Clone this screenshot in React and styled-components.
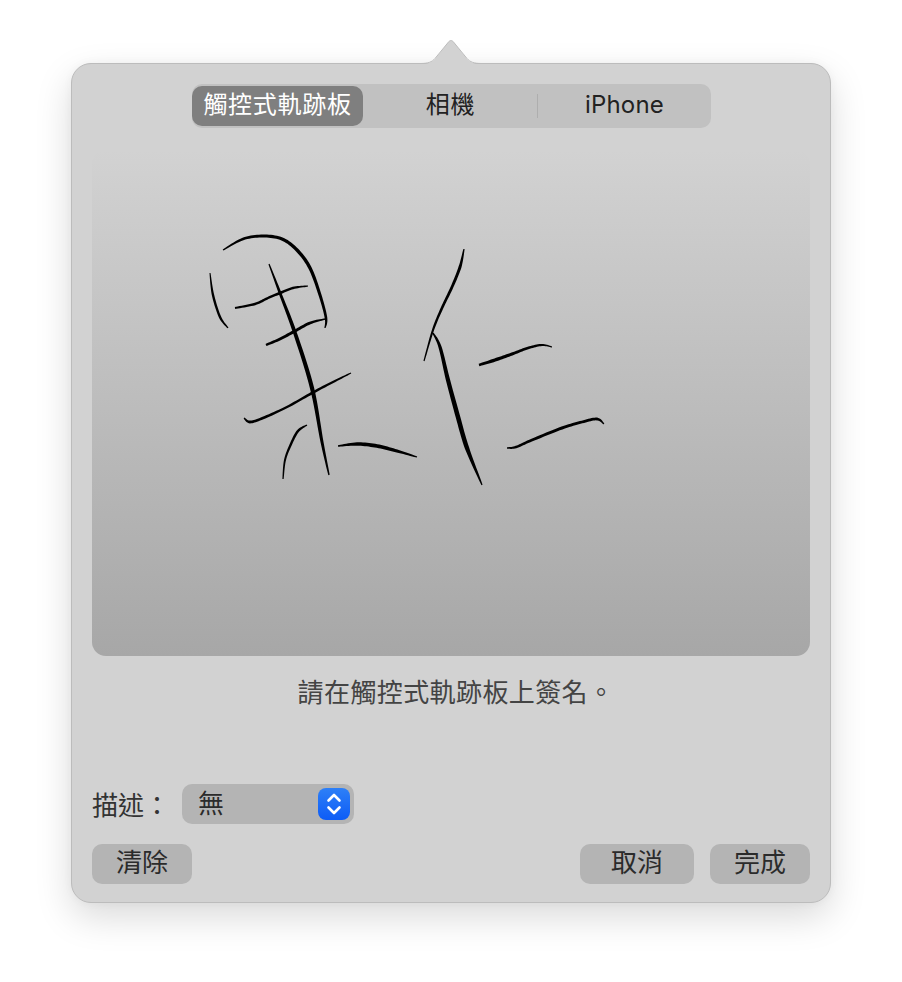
import React from "react";
import styled, { createGlobalStyle } from "styled-components";

// pen strokes in page pixels: [x, y, width]
const strokes = [
  [[223, 250, 1.2], [243, 239, 2.6], [263, 236, 3], [282, 239, 3.2], [297, 250, 3.4], [310, 268, 3.4], [320, 295, 3], [326, 318, 2.6], [325, 328, 1.2]],
  [[210, 273, 1], [213, 295, 2.4], [220, 317, 2.4], [228, 328, 1.2]],
  [[269, 264, 1.2], [280, 293, 2.8], [295, 333, 3.8], [312, 388, 4.2], [322, 442, 3], [329, 475, 1.4]],
  [[235, 308, 2], [255, 304, 2.4], [268, 298, 2.4], [280, 293, 2.6], [293, 288, 2.4], [308, 286, 1.2]],
  [[266, 345, 2.4], [280, 339, 2.8], [295, 331, 3], [310, 323, 2.8], [325, 319, 1.4]],
  [[244, 418, 1.2], [250, 422, 2.8], [263, 418, 2.6], [287, 407, 2.4], [312, 393, 2.6], [333, 382, 2.2], [351, 373, 1.2]],
  [[283, 479, 1.2], [285, 460, 2], [291, 444, 2.4], [298, 431, 2.6], [307, 425, 1.2]],
  [[338, 446, 1.4], [357, 444, 3.4], [377, 446, 3.8], [397, 451, 3], [417, 457, 1.2]],
  [[464, 249, 1.2], [460, 267, 3], [452, 287, 2.8], [442, 308, 2.6], [433, 330, 2.2], [424, 361, 1.2]],
  [[433, 333, 1.4], [440, 347, 3.2], [448, 380, 4.2], [458, 417, 4.6], [467, 448, 4.4], [482, 485, 1.2]],
  [[479, 365, 2.4], [495, 360, 3.4], [512, 354, 3], [528, 348, 2.6], [542, 345, 2.2], [552, 347, 1]],
  [[507, 448, 1.4], [516, 447, 2.4], [532, 440, 2.8], [562, 428, 3], [582, 422, 2.8], [597, 419, 2.8], [604, 424, 1]],
];

// catmull-rom through the points, then an outline offset by the pen width
const strokePath = (points) => {
  const samples = [];
  for (let i = 0; i < points.length - 1; i++) {
    const p0 = points[Math.max(i - 1, 0)];
    const p1 = points[i];
    const p2 = points[i + 1];
    const p3 = points[Math.min(i + 2, points.length - 1)];
    for (let s = 0; s < 10; s++) {
      const t = s / 10;
      const at = (k) =>
        0.5 *
        (2 * p1[k] +
          (p2[k] - p0[k]) * t +
          (2 * p0[k] - 5 * p1[k] + 4 * p2[k] - p3[k]) * t * t +
          (3 * p1[k] - p0[k] - 3 * p2[k] + p3[k]) * t * t * t);
      samples.push([at(0), at(1), p1[2] + (p2[2] - p1[2]) * t]);
    }
  }
  samples.push(points[points.length - 1]);
  const left = [];
  const right = [];
  samples.forEach((p, i) => {
    const a = samples[Math.max(i - 1, 0)];
    const b = samples[Math.min(i + 1, samples.length - 1)];
    const dx = b[0] - a[0];
    const dy = b[1] - a[1];
    const len = Math.hypot(dx, dy) || 1;
    const nx = (-dy / len) * (p[2] / 2);
    const ny = (dx / len) * (p[2] / 2);
    left.push(`${(p[0] + nx).toFixed(2)} ${(p[1] + ny).toFixed(2)}`);
    right.unshift(`${(p[0] - nx).toFixed(2)} ${(p[1] - ny).toFixed(2)}`);
  });
  return `M${left.join("L")}L${right.join("L")}Z`;
};

const App = () => (
  <Page>
    <GlobalStyle />
    <Popover>
      <Arrow viewBox="0 0 66 28" aria-hidden="true">
        <path
          d="M3 25C10 25 14 23.5 17 20L30.5 3C32 1 34 1 35.5 3L49 20C52 23.5 56 25 63 25V27H3Z"
          fill="#d2d2d2"
        />
        <path
          d="M3 24.5C10 24.5 14 23 17 19.5L30.5 3C32 1 34 1 35.5 3L49 19.5C52 23 56 24.5 63 24.5"
          fill="none"
          stroke="#bcbcbc"
          strokeWidth="1"
        />
      </Arrow>
      <Segments>
        <Segment $active $width={171} $spacing={0.7}>觸控式軌跡板</Segment>
        <Segment $width={175} $spacing={0.7} $divider>相機</Segment>
        <Segment $width={173} $spacing={0.2}>iPhone</Segment>
      </Segments>
      <Pad>
        <Signature viewBox="92 150 718 506" aria-hidden="true">
          {strokes.map((points, i) => (
            <path key={i} d={strokePath(points)} fill="#000" />
          ))}
        </Signature>
      </Pad>
      <Caption>請在觸控式軌跡板上簽名。</Caption>
      <DescriptionRow>
        <Label>描述：</Label>
        <Select>
          <SelectText>無</SelectText>
          <Stepper>
            <svg width="18" height="26" viewBox="0 0 18 26" fill="none" stroke="#fff" strokeWidth="2.6" strokeLinecap="round" strokeLinejoin="round">
              <path d="M3.5 9.5L9 4L14.5 9.5" />
              <path d="M3.5 16.5L9 22L14.5 16.5" />
            </svg>
          </Stepper>
        </Select>
      </DescriptionRow>
      <Actions>
        <Button $width={100}>清除</Button>
        <RightActions>
          <Button $width={114}>取消</Button>
          <Button $width={100}>完成</Button>
        </RightActions>
      </Actions>
    </Popover>
  </Page>
);

const GlobalStyle = createGlobalStyle`
  html, body {
    margin: 0;
    background: #fff;
  }
`;

const Page = styled.div`
  box-sizing: border-box;
  width: 902px;
  height: 982px;
  padding: 63px 0 0 71px;
  overflow: hidden;
  font-family: "Inter", "Noto Sans CJK TC", sans-serif;
`;

const Popover = styled.div`
  position: relative;
  box-sizing: border-box;
  display: flex;
  flex-direction: column;
  width: 760px;
  height: 840px;
  padding: 20px 20px 18px;
  border: 1px solid #bcbcbc;
  border-radius: 20px;
  background: #d2d2d2;
  box-shadow: 0 14px 36px rgba(0, 0, 0, 0.15), 0 0 10px rgba(0, 0, 0, 0.04);
`;

const Arrow = styled.svg`
  position: absolute;
  top: -25px;
  left: 346px;
  width: 66px;
  height: 28px;
  overflow: visible;
`;

const Segments = styled.div`
  display: flex;
  align-self: center;
  width: 519px;
  height: 44px;
  margin-left: 1px;
  border-radius: 10px;
  background: #c1c1c1;
`;

const Segment = styled.div`
  position: relative;
  display: flex;
  align-items: center;
  justify-content: center;
  box-sizing: border-box;
  width: ${(p) => p.$width}px;
  height: ${(p) => (p.$active ? "40px" : "44px")};
  margin: ${(p) => (p.$active ? "2px 0" : "0")};
  padding-bottom: 2px;
  border-radius: 10px;
  background: ${(p) => (p.$active ? "#7f7f7f" : "transparent")};
  color: ${(p) => (p.$active ? "#fff" : "#222")};
  font-size: 24px;
  letter-spacing: ${(p) => p.$spacing}px;
  line-height: 1;

  ${(p) =>
    p.$divider &&
    `&::after {
      content: "";
      position: absolute;
      top: 10px;
      right: 0;
      width: 1px;
      height: 24px;
      background: #aeaeae;
    }`}
`;

const Pad = styled.div`
  flex: none;
  height: 506px;
  margin-top: 22px;
  border-radius: 14px;
  overflow: hidden;
  background: linear-gradient(180deg, #d2d2d2 0%, #a7a7a7 100%);
`;

const Signature = styled.svg`
  display: block;
  width: 100%;
  height: 100%;
`;

const Caption = styled.div`
  height: 32px;
  margin-top: 21px;
  padding-left: 10px;
  color: #444;
  font-size: 26px;
  letter-spacing: 0.4px;
  line-height: 32px;
  text-align: center;
`;

const DescriptionRow = styled.div`
  display: flex;
  align-items: center;
  gap: 16px;
  height: 40px;
  margin-top: 75px;
`;

const Label = styled.div`
  width: 74px;
  padding-top: 3px;
  color: #333;
  font-size: 26px;
  line-height: 37px;
  white-space: nowrap;
`;

const Select = styled.div`
  display: flex;
  align-items: center;
  justify-content: space-between;
  box-sizing: border-box;
  width: 172px;
  height: 40px;
  padding: 0 4px 0 16px;
  border-radius: 10px;
  background: #b4b4b4;
`;

const SelectText = styled.span`
  padding-bottom: 1px;
  color: #2b2b2b;
  font-size: 26px;
  line-height: 39px;
`;

const Stepper = styled.div`
  display: flex;
  align-items: center;
  justify-content: center;
  width: 32px;
  height: 32px;
  border-radius: 8px;
  background: linear-gradient(180deg, #2e80f7 0%, #0d5cf6 100%);
`;

const Actions = styled.div`
  display: flex;
  justify-content: space-between;
  margin-top: 20px;
`;

const RightActions = styled.div`
  display: flex;
  gap: 16px;
`;

const Button = styled.div`
  display: flex;
  align-items: center;
  justify-content: center;
  box-sizing: border-box;
  width: ${(p) => p.$width}px;
  height: 40px;
  padding-bottom: 2px;
  border-radius: 10px;
  background: #b4b4b4;
  color: #2b2b2b;
  font-size: 26px;
  line-height: 1;
`;

export default App;
